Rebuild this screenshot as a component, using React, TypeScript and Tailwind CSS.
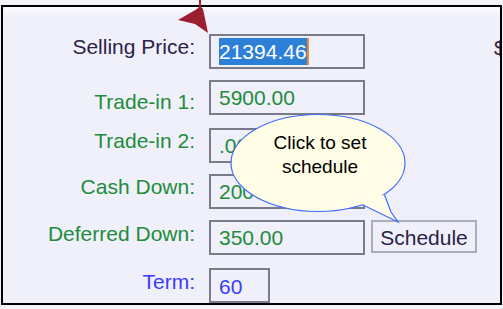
import React from "react";

const FONT = { fontFamily: '"Liberation Sans", Arial, sans-serif' };

function Label({ text, color, mt }: { text: string; color: string; mt: string }) {
  return (
    <div className={`w-[192px] shrink-0 text-right text-[21px] leading-[21px] whitespace-nowrap ${color} ${mt}`}>
      {text}
    </div>
  );
}

export default function App() {
  return (
    <div className="relative w-[503px] h-[309px] overflow-hidden bg-[#f3f3f9] pt-[5px] pl-[1px]" style={FONT}>
      <div className="w-[501px] h-[300px] border-2 border-black overflow-hidden bg-[linear-gradient(to_bottom,#fcfcff,#f0f0fa_9px)] flex flex-col">
        {/* Selling Price */}
        <div className="flex items-start mt-[27px] shrink-0">
          <Label text="Selling Price:" color="text-[#2b2347]" mt="mt-[2px]" />
          <div className="ml-[14px] w-[156px] h-[35px] shrink-0 border-2 border-[#7a7a8a] pl-[8px] pt-[2px] flex items-start">
            <span className="inline-block bg-[#2d80d8] text-white text-[21px] leading-[27px] h-[27px]">21394.46</span>
            <span className="inline-block w-[2px] h-[27px] bg-[#f08a30]"></span>
          </div>
          <div className="ml-[129px] shrink-0 text-[21px] leading-[21px] mt-[3px] text-[#2b2347]">$</div>
        </div>

        {/* Trade-in 1 */}
        <div className="flex items-start mt-[11px] shrink-0">
          <Label text="Trade-in 1:" color="text-[#1e8c3c]" mt="mt-[11px]" />
          <div className="ml-[14px] w-[156px] h-[35px] shrink-0 border-2 border-[#7a7a8a] pl-[8px] pt-[5px] text-[21px] leading-[21px] text-[#1e8c3c]">
            5900.00
          </div>
        </div>

        {/* Trade-in 2 */}
        <div className="flex items-start mt-[13px] shrink-0">
          <Label text="Trade-in 2:" color="text-[#1e8c3c]" mt="mt-[2px]" />
          <div className="ml-[14px] w-[156px] h-[35px] shrink-0 border-2 border-[#7a7a8a] pl-[8px] pt-[5px] text-[21px] leading-[21px] text-[#1e8c3c]">
            .00
          </div>
        </div>

        {/* Cash Down */}
        <div className="flex items-start mt-[11px] shrink-0">
          <Label text="Cash Down:" color="text-[#1e8c3c]" mt="mt-[2px]" />
          <div className="ml-[14px] w-[156px] h-[35px] shrink-0 border-2 border-[#7a7a8a] pl-[8px] pt-[5px] text-[21px] leading-[21px] text-[#1e8c3c]">
            2000.00
          </div>
        </div>

        {/* Deferred Down */}
        <div className="flex items-start mt-[11px] shrink-0">
          <Label text="Deferred Down:" color="text-[#1e8c3c]" mt="mt-[3px]" />
          <div className="ml-[14px] w-[156px] h-[35px] shrink-0 border-2 border-[#7a7a8a] pl-[8px] pt-[5px] text-[21px] leading-[21px] text-[#1e8c3c]">
            350.00
          </div>
          <div className="ml-[6px] w-[106px] h-[33px] shrink-0 border-2 border-[#adadbd] flex justify-center pt-[5px] text-[21px] leading-[21px] text-[#2b2347]">
            Schedule
          </div>
        </div>

        {/* Term */}
        <div className="flex items-start mt-[13px] shrink-0">
          <Label text="Term:" color="text-[#3b3bff]" mt="mt-[3px]" />
          <div className="ml-[14px] w-[61px] h-[35px] shrink-0 border-2 border-[#7a7a8a] pl-[8px] pt-[6px] text-[21px] leading-[21px] text-[#3b3bff]">
            60
          </div>
        </div>
      </div>

      {/* overlays: callout bubble and pointer arrow */}
      <svg className="absolute left-0 top-0 pointer-events-none" width="503" height="309" viewBox="0 0 503 309">
        <ellipse cx="318" cy="163" rx="87" ry="48.5" fill="#fffde6" stroke="#3d6cff" strokeWidth="1.2" />
        <polygon points="358,200 362,205 398,222 391,212 384,195 378,196" fill="#fffde6" />
        <polyline points="362,204.5 398,222 391,212 384.5,195" fill="none" stroke="#3d6cff" strokeWidth="1.2" />
        <polygon
          points="199,0 201,0 201,7 203,9 208,33 195,24 178,20 197,9 199,7"
          fill="#9c1e30"
        />
      </svg>
      <div className="absolute left-[260px] top-[131px] w-[120px] text-center text-[19px] leading-[24px] text-black">
        <div>Click to set</div>
        <div>schedule</div>
      </div>
    </div>
  );
}
